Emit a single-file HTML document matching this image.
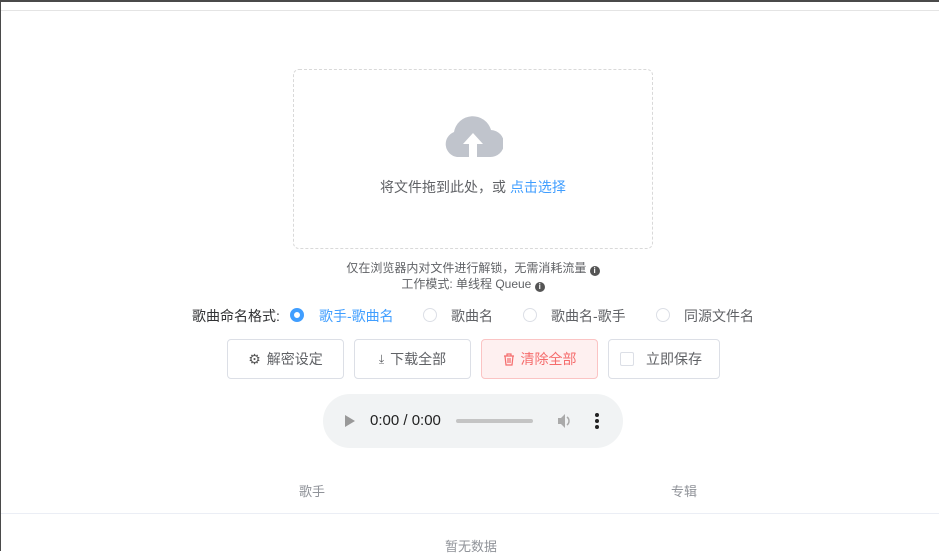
<!DOCTYPE html>
<html><head><meta charset="utf-8"><style>
*{margin:0;padding:0;box-sizing:border-box}
body{width:939px;height:551px;overflow:hidden;background:#fff;font-family:"Liberation Sans","Noto Sans CJK SC",sans-serif;position:relative;color:#606266}
.abs{position:absolute}
.btn{position:absolute;top:339px;height:40px;border:1px solid #dcdfe6;border-radius:4px;font-size:14px;color:#606266;display:flex;align-items:center;justify-content:center;gap:6px;background:#fff}
.radio{position:absolute;top:308px;width:14px;height:14px;border-radius:50%;border:1px solid #dcdfe6}
.rl{position:absolute;top:306px;font-size:14px;color:#606266}
</style></head><body>
<div class="abs" style="left:0;top:0;width:939px;height:2px;background:#4a4a4a"></div>
<div class="abs" style="left:0;top:0;width:1px;height:551px;background:#4a4a4a"></div>
<div class="abs" style="left:1px;top:10px;width:938px;height:1px;background:#e4e4e4"></div>
<div class="abs" style="left:293px;top:69px;width:360px;height:180px;border:1px dashed #d9d9d9;border-radius:6px"></div>
<svg class="abs" style="left:443px;top:113px" width="60" height="46" viewBox="0 0 60 46">
<path d="M14 44 A13 13 0 0 1 11 19 A19 19 0 0 1 48 17 A13.5 13.5 0 0 1 47 44 Z" fill="#c0c4cc"/>
<path d="M30 20 L20 31 H26 V46 H34 V31 H40 Z" fill="#fff"/>
</svg>
<div class="abs" style="left:293px;top:177px;width:360px;text-align:center;font-size:14px;color:#606266">将文件拖到此处，或 <span style="color:#409eff">点击选择</span></div>
<div class="abs" style="left:293px;top:260px;width:360px;text-align:center;font-size:12px;line-height:16px;color:#606266">仅在浏览器内对文件进行解锁，无需消耗流量 <span style="display:inline-block;width:10px;height:10px;border-radius:50%;background:#555;color:#fff;font-size:8px;line-height:10px;font-weight:bold;vertical-align:-1px">i</span><br>工作模式: 单线程 Queue <span style="display:inline-block;width:10px;height:10px;border-radius:50%;background:#555;color:#fff;font-size:8px;line-height:10px;font-weight:bold;vertical-align:-1px">i</span></div>
<div class="rl" style="left:192px;color:#303133">歌曲命名格式:</div>
<div class="radio" style="left:290px;border:4px solid #409eff;background:#fff"></div>
<div class="rl" style="left:319px;color:#409eff">歌手-歌曲名</div>
<div class="radio" style="left:423px"></div><div class="rl" style="left:451px">歌曲名</div>
<div class="radio" style="left:523px"></div><div class="rl" style="left:551px">歌曲名-歌手</div>
<div class="radio" style="left:656px"></div><div class="rl" style="left:684px">同源文件名</div>
<div class="btn" style="left:227px;width:117px"><span style="font-size:14px;color:#555">⚙</span>解密设定</div>
<div class="btn" style="left:354px;width:117px"><span style="font-size:12px">⤓</span>下载全部</div>
<div class="btn" style="left:481px;width:117px;background:#fef0f0;border-color:#fbc4c4;color:#f56c6c"><svg width="12" height="13" viewBox="0 0 12 13"><path d="M1 3H11M4 3V1H8V3M2 3L3 12H9L10 3M5 5V10M7 5V10" stroke="#f56c6c" fill="none" stroke-width="1.2"/></svg>清除全部</div>
<div class="btn" style="left:608px;width:112px;justify-content:flex-start;padding-left:11px;gap:12px"><span style="width:14px;height:14px;border:1px solid #dcdfe6;border-radius:2px"></span>立即保存</div>
<div class="abs" style="left:323px;top:394px;width:300px;height:54px;border-radius:27px;background:#f1f3f4"></div>
<svg class="abs" style="left:344px;top:414px" width="12" height="14"><path d="M1 1L11 7L1 13Z" fill="#999"/></svg>
<div class="abs" style="left:370px;top:412px;font-size:15px;color:#222">0:00 / 0:00</div>
<div class="abs" style="left:456px;top:419px;width:77px;height:4px;border-radius:2px;background:#c4c4c4"></div>
<svg class="abs" style="left:557px;top:413px" width="16" height="16"><path d="M1 5H4L8 1V15L4 11H1Z" fill="#aaa"/><path d="M10 4A5 5 0 0 1 10 12" stroke="#aaa" fill="none" stroke-width="1.5"/></svg>
<div class="abs" style="left:595px;top:413px;width:4px;height:16px;display:flex;flex-direction:column;justify-content:space-between"><i style="width:4px;height:4px;border-radius:50%;background:#222"></i><i style="width:4px;height:4px;border-radius:50%;background:#222"></i><i style="width:4px;height:4px;border-radius:50%;background:#222"></i></div>
<div class="abs" style="left:299px;top:481px;font-size:13px;color:#909399">歌手</div>
<div class="abs" style="left:671px;top:481px;font-size:13px;color:#909399">专辑</div>
<div class="abs" style="left:1px;top:513px;width:938px;height:1px;background:#ebeef5"></div>
<div class="abs" style="left:445px;top:536px;font-size:13px;color:#909399">暂无数据</div>
</body></html>
